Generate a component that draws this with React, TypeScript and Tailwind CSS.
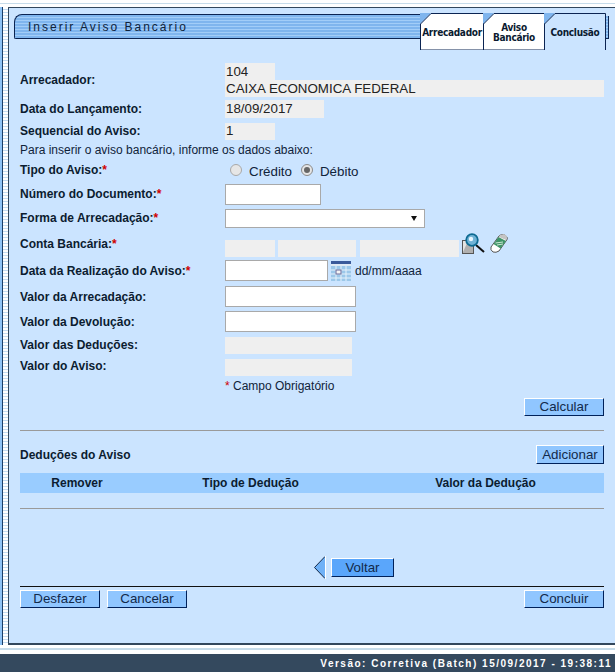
const inputCls = "h-[21px] border border-[#a9a9a9] bg-white";

function Req() {
  return <span className="text-[#d00000]">*</span>;
}

function Label({ children }: { children: React.ReactNode }) {
  return <div className="w-[205px] shrink-0 text-[12px] font-bold text-[#0c1c30]">{children}</div>;
}

function Gray({ w, h = 17, children }: { w: number; h?: number; children?: React.ReactNode }) {
  return (
    <div className="flex items-center bg-[#efefef] pl-px text-[13.33px] leading-none text-[#222]" style={{ width: w, height: h }}>
      {children}
    </div>
  );
}

function Btn({ w, h = 18, light, children }: { w: number; h?: number; light?: boolean; children: React.ReactNode }) {
  return (
    <button
      className={
        "flex items-center justify-center border border-t-white border-l-white border-r-[#00215a] border-b-[#00215a] text-[13.33px] leading-none text-[#12294a] " +
        (light ? "bg-[#90c6ff]" : "bg-[#5aa6fb]")
      }
      style={{ width: w, height: h }}
    >
      {children}
    </button>
  );
}

function Tab({ w, active, children }: { w: number; active?: boolean; children: React.ReactNode }) {
  return (
    <div className="relative -ml-px flex h-[37px] shrink-0 items-center justify-center pt-[3px] first:ml-0" style={{ width: w }}>
      <svg className="absolute inset-0" width={w} height={37}>
        <polygon points="0,0 11,0 0,11" fill="#7fb5ee" />
        <polygon
          points={`0.5,37 0.5,11 11,0.5 ${w - 0.5},0.5 ${w - 0.5},37`}
          fill={active ? "#cbe4ff" : "#fff"}
          stroke="#0b2452"
          strokeDasharray={active ? `${w + 66} ${w + 2}` : undefined}
        />
      </svg>
      <span className="relative text-center font-['DejaVu_Sans_Condensed','DejaVu_Sans',sans-serif] text-[10px] leading-[10px] font-bold tracking-[-0.3px] text-[#0a1a30]">
        {children}
      </span>
    </div>
  );
}

export default function App() {
  return (
    <div className="flex h-[672px] w-[615px] flex-col overflow-hidden bg-white font-['Liberation_Sans',sans-serif]">
      <div className="h-[3px] shrink-0 bg-white" />
      <div className="h-[1px] shrink-0 bg-[#c7dcea]" />
      <div className="h-[3px] shrink-0 bg-white" />

      <div className="flex min-h-0 flex-1">
        <div className="w-[3px] shrink-0 border-r border-[#1d3e66] bg-[#8fc3f5]" />
        <div className="w-[5px] shrink-0 bg-[repeating-linear-gradient(180deg,#ffffff_0,#ffffff_2px,#c4dcf2_2px,#c4dcf2_3px)]" />
        <div className="flex h-[638px] flex-1 flex-col border-t border-l border-b-2 border-[#33475c] bg-[#cbe4ff] pr-[6px] pl-[5px]">
          {/* header */}
          <div className="flex h-[37px] shrink-0 items-start">
            <div className="mt-[6px] flex h-[25px] flex-1 items-center rounded-tl-[8px] rounded-bl-[2px] border border-r-0 border-[#0b2452] bg-[repeating-linear-gradient(180deg,#7fb5ee_0,#7fb5ee_2px,#a2cdf8_2px,#a2cdf8_3px)] pl-[13px] text-[12px] tracking-[2px] text-[#10233a]">
              Inserir Aviso Bancário
            </div>
            <div className="mt-[5px] flex">
              <Tab w={64}>Arrecadador</Tab>
              <Tab w={62}>
                Aviso
                <br />
                Bancário
              </Tab>
              <Tab w={62} active>
                Conclusão
              </Tab>
            </div>
            <div className="mt-[8px] h-[23px] w-[3px] shrink-0 border-r border-b border-[#0b2452] bg-[repeating-linear-gradient(180deg,#7fb5ee_0,#7fb5ee_2px,#a2cdf8_2px,#a2cdf8_3px)]" />
          </div>

          <div className="flex flex-col pr-[5px] pl-[6px]">
            {/* dados do arrecadador */}
            <div className="mt-[18px] flex items-center">
              <Label>Arrecadador:</Label>
              <div className="flex flex-col">
                <Gray w={50}>104</Gray>
                <Gray w={379}>CAIXA ECONOMICA FEDERAL</Gray>
              </div>
            </div>
            <div className="mt-[3px] flex items-center">
              <Label>Data do Lançamento:</Label>
              <Gray w={99} h={18}>18/09/2017</Gray>
            </div>
            <div className="mt-[4px] flex items-center">
              <Label>Sequencial do Aviso:</Label>
              <Gray w={50}>1</Gray>
            </div>
            <div className="mt-[3px] h-[14px] text-[12px] leading-[14px] text-[#10233a]">
              Para inserir o aviso bancário, informe os dados abaixo:
            </div>

            <div className="mt-[3px] flex h-[20px] items-center">
              <Label>
                Tipo do Aviso:<Req />
              </Label>
              <div className="flex items-center text-[13.33px] text-[#10233a]">
                <span className="ml-[5px] size-[12px] rounded-full border border-[#a8a8a8] bg-[#e6e6e6]" />
                <span className="mt-[4px] ml-[7px]">Crédito</span>
                <span className="ml-[9px] flex size-[12px] items-center justify-center rounded-full border border-[#8a8a8a] bg-[#e6e6e6]">
                  <span className="size-[6px] rounded-full bg-[#666]" />
                </span>
                <span className="mt-[4px] ml-[7px]">Débito</span>
              </div>
            </div>

            <div className="mt-[4px] flex items-center">
              <div className="-mt-px mb-px">
                <Label>
                  Número do Documento:<Req />
                </Label>
              </div>
              <div className={inputCls + " w-[96px]"} />
            </div>
            <div className="mt-[4px] flex items-center">
              <div className="-mt-px mb-px">
                <Label>
                  Forma de Arrecadação:<Req />
                </Label>
              </div>
              <div className="flex h-[19px] w-[200px] items-center justify-end border border-[#a9a9a9] bg-white pr-[7px]">
                <svg width="6" height="5" viewBox="0 0 6 5">
                  <polygon points="0,0 6,0 3,5" fill="#111" />
                </svg>
              </div>
            </div>
            <div className="mt-[10px] flex h-[21px] items-center">
              <div className="mb-[10px]">
                <Label>
                  Conta Bancária:<Req />
                </Label>
              </div>
              <div className="flex items-center">
                <Gray w={50} />
                <div className="w-[3px]" />
                <Gray w={78} />
                <div className="w-[4px]" />
                <Gray w={99} />
                <svg className="mb-[11px] ml-[3px]" width="23" height="21" viewBox="0 0 23 21">
                  <rect x="0.5" y="7.5" width="11" height="13" fill="#b0b0b0" stroke="#555" />
                  <polygon points="1,8 6,8 1,19" fill="#e4e4e4" />
                  <line x1="14" y1="12" x2="22" y2="19" stroke="#111" strokeWidth="2" />
                  <circle cx="10" cy="7" r="5.8" fill="#6fb2d6" stroke="#0d6a92" strokeWidth="1.8" />
                  <circle cx="9" cy="6" r="2.2" fill="#e9f7ff" />
                </svg>
                <svg className="mb-[11px] ml-[5px]" width="18" height="21" viewBox="0 0 18 21">
                  <path d="M1 14 L9 3 Q11 1 14 1.5 L17 4 Q18 6 16 8 L9 18 Q6 20 3 19 Q0 17 1 14Z" fill="#fff" stroke="#555" />
                  <path d="M3.5 11 L8.5 4 L16 8 L10.5 15.5Z" fill="#3f9468" />
                  <path d="M5.5 10 L13 9 M7 12 L13 11" stroke="#cfe8d6" strokeWidth="1" />
                  <path d="M10 2 L14 1 L17 3 L16 7 L9 4Z" fill="#c4c4c4" />
                </svg>
              </div>
            </div>
            <div className="mt-[1px] flex items-center">
              <Label>
                Data da Realização do Aviso:<Req />
              </Label>
              <div className={inputCls + " w-[103px]"} />
              <svg className="ml-[3px]" width="20" height="20" viewBox="0 0 20 20">
                <rect width="20" height="20" fill="#9cc8ea" />
                <rect x="0" y="0" width="20" height="3" fill="#3a5a9a" />
                <rect x="0" y="3" width="20" height="2" fill="#dfeaf4" />
                <path d="M0 9H20M0 13H20M0 17H20M5 5V20M10 5V20M15 5V20" stroke="#e6f2fb" strokeWidth="1" />
                <rect x="5" y="9" width="5" height="4" fill="#f5f5f5" stroke="#6a6a9a" />
              </svg>
              <span className="ml-[4px] text-[12px] text-[#10233a]">dd/mm/aaaa</span>
            </div>
            <div className="mt-[5px] flex items-center">
              <Label>Valor da Arrecadação:</Label>
              <div className={inputCls + " w-[131px]"} />
            </div>
            <div className="mt-[4px] flex items-center">
              <Label>Valor da Devolução:</Label>
              <div className={inputCls + " w-[131px]"} />
            </div>
            <div className="mt-[4px] flex items-center">
              <Label>Valor das Deduções:</Label>
              <Gray w={127} />
            </div>
            <div className="mt-[4px] flex items-center">
              <div className="-mt-px mb-px">
                <Label>Valor do Aviso:</Label>
              </div>
              <Gray w={127} />
            </div>
            <div className="mt-[3px] h-[14px] pl-[205px] text-[12px] leading-[14px] text-[#10233a]">
              <Req /> Campo Obrigatório
            </div>

            <div className="mt-[5px] flex justify-end">
              <Btn w={80} light>Calcular</Btn>
            </div>
            <div className="mt-[14px] h-px bg-[#9a9a9a]" />

            <div className="mt-[14px] flex h-[19px] items-center justify-between">
              <span className="text-[12px] font-bold text-[#0c1c30]">Deduções do Aviso</span>
              <Btn w={68} h={19} light>Adicionar</Btn>
            </div>
            <div className="mt-[9px] flex h-[20px] items-center bg-[#99ccff] text-[12px] font-bold text-[#0c1c30]">
              <div className="w-[114px] text-center">Remover</div>
              <div className="w-[233px] text-center">Tipo de Dedução</div>
              <div className="flex-1 text-center">Valor da Dedução</div>
            </div>
            <div className="mt-[15px] h-px bg-[#9a9a9a]" />

            <div className="mt-[49px] flex h-[19px] items-center pl-[294px]">
              <svg width="12" height="23" viewBox="0 0 12 23">
                <polygon points="11,0.5 11,22.5 0.5,11.5" fill="#6fb1f7" />
                <path d="M11 0.5 L0.5 11.5 L11 22.5" fill="none" stroke="#12294a" />
                <line x1="11.5" y1="0" x2="11.5" y2="23" stroke="#fff" />
              </svg>
              <div className="w-[5px]" />
              <Btn w={63} h={19}>Voltar</Btn>
            </div>
            <div className="mt-[9px] h-px bg-[#111]" />
            <div className="mt-[3px] flex gap-[7px]">
              <Btn w={80} light>Desfazer</Btn>
              <Btn w={80} light>Cancelar</Btn>
              <div className="flex-1" />
              <Btn w={80} light>Concluir</Btn>
            </div>
          </div>
        </div>
      </div>

      <div className="h-[3px] shrink-0 bg-white" />
      <div className="h-[2px] shrink-0 bg-[#c7dcea]" />
      <div className="h-[4px] shrink-0 bg-white" />
      <div className="flex h-[18px] shrink-0 items-center justify-end bg-[#34495e] pr-[3px] text-[10px] font-bold tracking-[1.5px] text-white">
        Versão: Corretiva (Batch) 15/09/2017 - 19:38:11
      </div>
    </div>
  );
}
